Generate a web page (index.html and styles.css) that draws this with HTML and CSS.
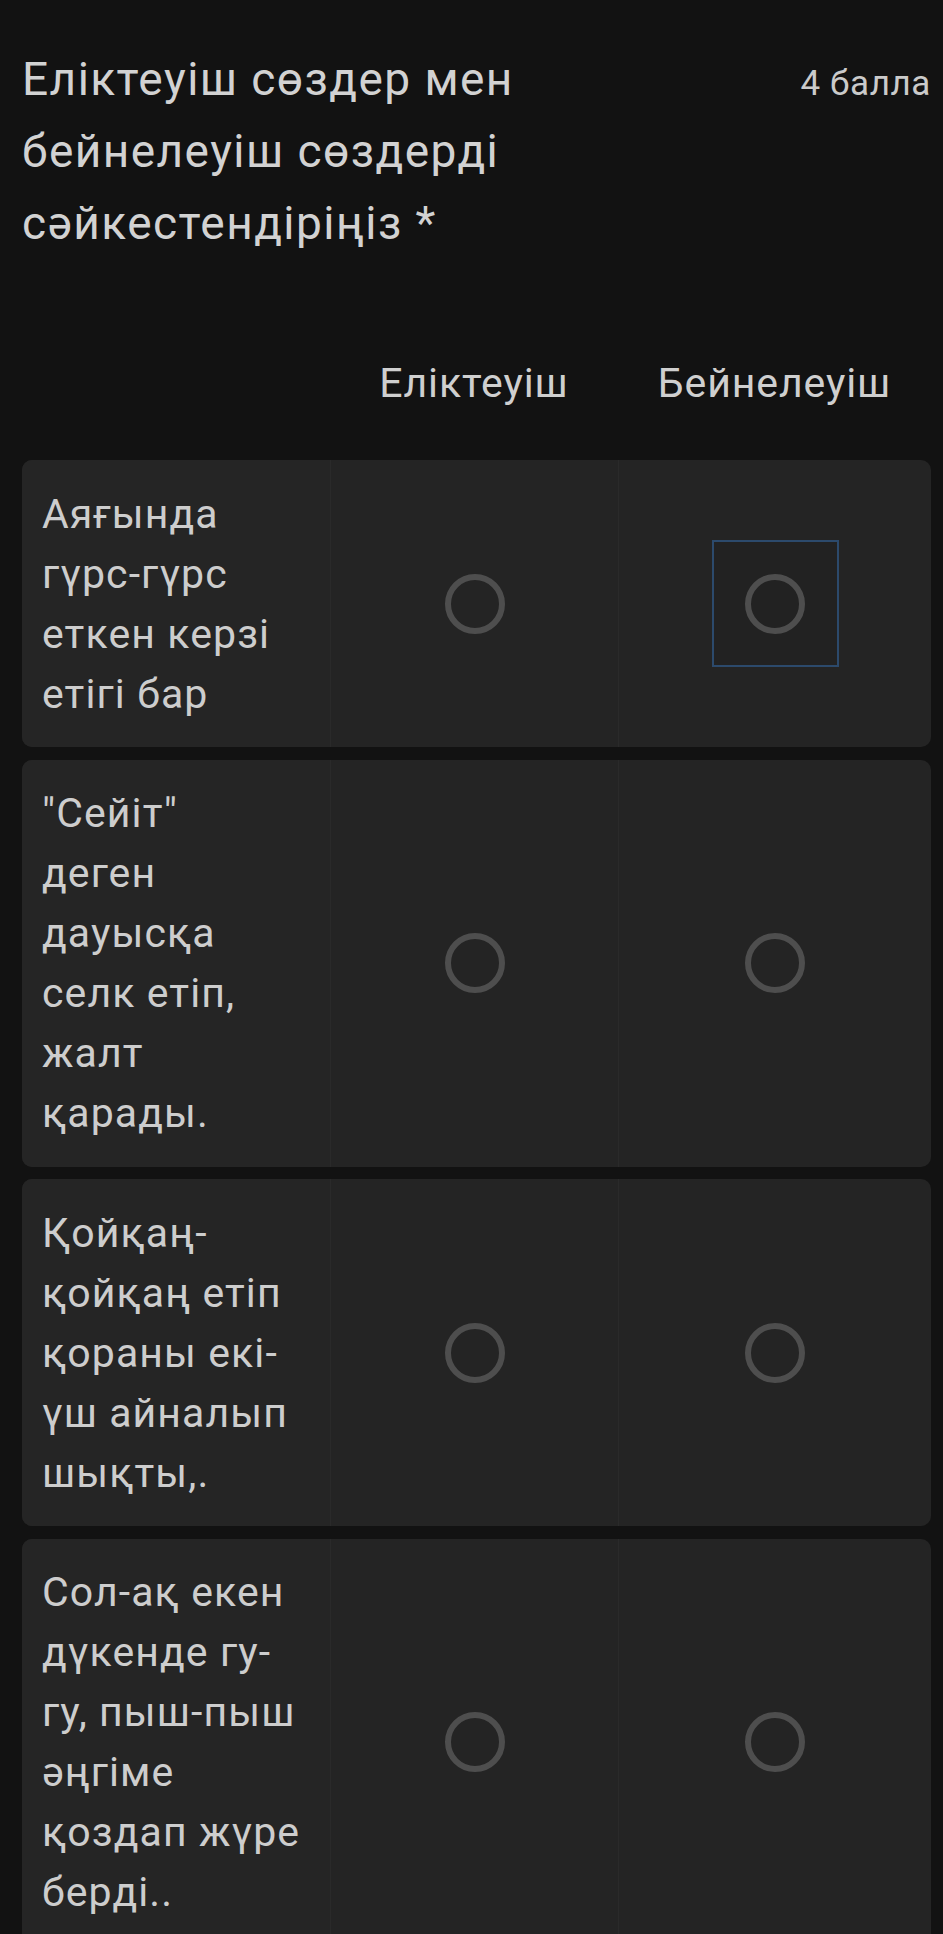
FILE: index.html
```html
<!DOCTYPE html>
<html lang="kk">
<head>
<meta charset="utf-8">
<title>Grid question</title>
<link rel="stylesheet" href="styles.css">
</head>
<body>
<div class="page">
  <div class="question-head">
    <div class="title">Еліктеуіш сөздер мен<br>бейнелеуіш сөздерді<br>сәйкестендіріңіз *</div>
    <div class="points">4 балла</div>
  </div>

  <div class="grid-header">
    <div></div>
    <div class="col-h">Еліктеуіш</div>
    <div class="col-h">Бейнелеуіш</div>
  </div>

  <div class="rows">
    <div class="row">
      <div class="label">Аяғында<br>гүрс-гүрс<br>еткен керзі<br>етігі бар</div>
      <div class="cell"><span class="radio"></span></div>
      <div class="cell"><span class="focus"><span class="radio"></span></span></div>
    </div>
    <div class="row">
      <div class="label">"Сейіт"<br>деген<br>дауысқа<br>селк етіп,<br>жалт<br>қарады.</div>
      <div class="cell"><span class="radio"></span></div>
      <div class="cell"><span class="radio"></span></div>
    </div>
    <div class="row">
      <div class="label">Қойқаң-<br>қойқаң етіп<br>қораны екі-<br>үш айналып<br>шықты,.</div>
      <div class="cell"><span class="radio"></span></div>
      <div class="cell"><span class="radio"></span></div>
    </div>
    <div class="row">
      <div class="label">Сол-ақ екен<br>дүкенде гу-<br>гу, пыш-пыш<br>әңгіме<br>қоздап жүре<br>берді..</div>
      <div class="cell"><span class="radio"></span></div>
      <div class="cell"><span class="radio"></span></div>
    </div>
  </div>
</div>
</body>
</html>
```

FILE: styles.css
```css
html, body {
  margin: 0;
  padding: 0;
  background: #121212;
  overflow: hidden;
}

.page {
  padding: 43px 12px 0 22px;
  font-family: Roboto, "Noto Sans", sans-serif;
  color: #cdcdcd;
}

.question-head {
  display: flex;
  align-items: baseline;
  justify-content: space-between;
}

.title {
  font-size: 46px;
  line-height: 72px;
  letter-spacing: 1.45px;
  color: #d2d2d2;
}

.points {
  font-size: 35px;
  line-height: 48px;
  letter-spacing: 0.6px;
  color: #cacaca;
}

.grid-header {
  display: grid;
  grid-template-columns: 308px 288px 1fr;
  margin-top: 94px;
  margin-bottom: 47px;
  font-size: 41px;
  line-height: 60px;
  letter-spacing: 0.9px;
  color: #cfcfcf;
}

.col-h {
  text-align: center;
}

.rows {
  display: flex;
  flex-direction: column;
  gap: 12.5px;
}

.row {
  display: grid;
  grid-template-columns: 308px 288px 1fr;
  background: #242424;
  border-radius: 10px;
  overflow: hidden;
}

.label {
  padding: 23.5px 0 23.5px 20px;
  font-size: 41px;
  line-height: 60px;
  letter-spacing: 1.1px;
  color: #cdcdcd;
  white-space: nowrap;
  background: #252525;
}

.cell {
  display: flex;
  align-items: center;
  justify-content: center;
  border-left: 1px solid #2a2a2a;
}

.radio {
  display: block;
  width: 60px;
  height: 60px;
  box-sizing: border-box;
  border: 6px solid #4e4e4e;
  border-radius: 50%;
}

.focus {
  display: flex;
  align-items: center;
  justify-content: center;
  width: 127px;
  height: 127px;
  box-sizing: border-box;
  border: 2px solid #2c4a6c;
  background: #222222;
}
```
